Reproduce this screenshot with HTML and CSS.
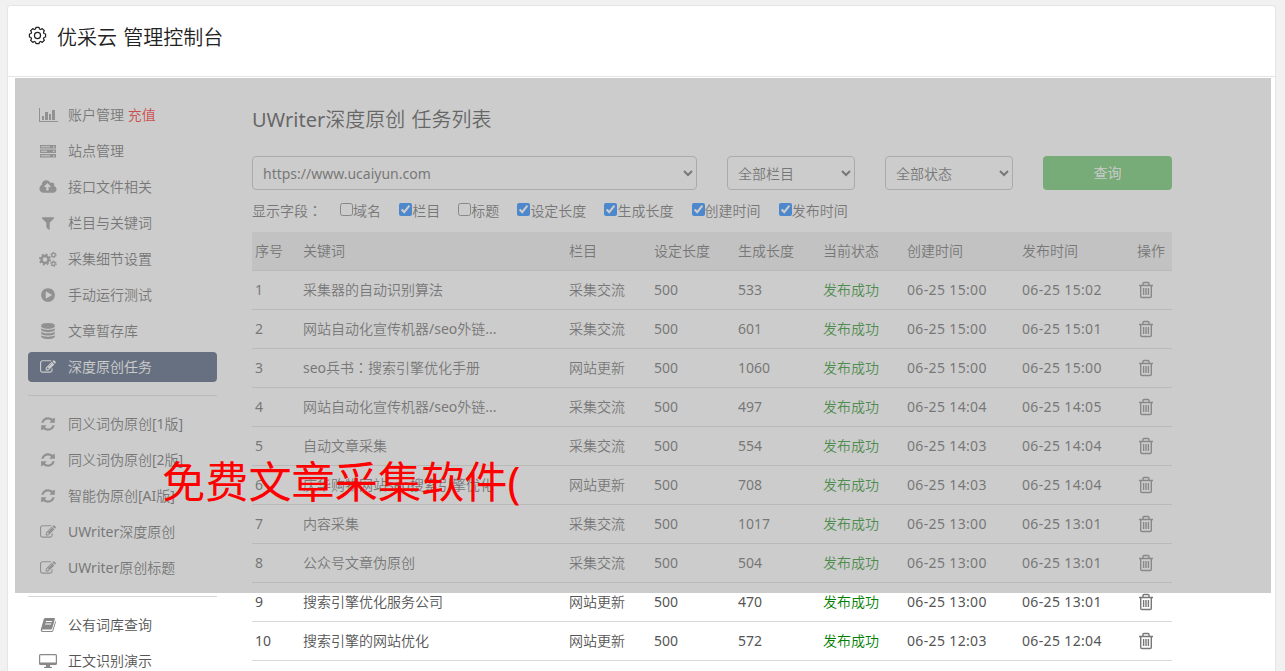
FILE: index.html
```html
<!DOCTYPE html>
<html lang="zh-CN">
<head>
    <meta charset="UTF-8">
    <meta name="viewport" content="width=device-width, initial-scale=1.0">
    <title>优采云 管理控制台</title>
    <link rel="stylesheet" href="styles.css">
</head>
<body>

<!-- 图标 -->
<svg class="sprite">
    <symbol id="i-chart" viewBox="0 0 20 16"><path d="M1 1h1v13h18v1H1zM4 9h2v4H4zM7 5h3v8H7zM11 7h2v6h-2zM14 3h3v10h-3z"/></symbol>
    <symbol id="i-server" viewBox="0 0 20 16"><path fill-rule="evenodd" d="M2 2h16v3.500H2zM3 3.300v1h9v-1zM15 3.200v1.200h1.500V3.200zM2 6.500h16V10H2zM3 7.800v1h6v-1zM15 7.700v1.200h1.500V7.700zM2 11h16v3.500H2zM3 12.300v1h9v-1zM15 12.200v1.200h1.500v-1.200z"/></symbol>
    <symbol id="i-cloud" viewBox="-64 0 1920 1792"><path d="M1216 864q0-14-9-23l-352-352q-9-9-23-9t-23 9l-351 351q-10 12-10 24 0 14 9 23t23 9h224v352q0 13 9.500 22.500t22.500 9.500h192q13 0 22.500-9.500t9.500-22.500v-352h224q13 0 22.500-9.500t9.500-22.500zm640 288q0 159-112.500 271.500t-271.500 112.500h-1088q-185 0-316.500-131.500t-131.500-316.500q0-130 70-240t188-165q-2-30-2-43 0-212 150-362t362-150q156 0 285.500 87t188.500 231q71-62 166-62 106 0 181 75t75 181q0 76-41 138 130 31 213.500 135.500t83.500 238.500z"/></symbol>
    <symbol id="i-filter" viewBox="0 0 1792 1792"><path d="M1595 295q17 41-14 70l-493 493v742q0 42-39 59-13 5-25 5-27 0-45-19l-256-256q-19-19-19-45v-486l-493-493q-31-29-14-70 17-39 59-39h1280q42 0 59 39z"/></symbol>
    <symbol id="i-cogs" viewBox="0 0 20 16">
        <g fill="none" stroke="currentColor">
            <circle cx="7" cy="8.500" r="3.500" stroke-width="2.400"/>
            <circle cx="7" cy="8.500" r="5.200" stroke-width="1.600" stroke-dasharray="2.040 2.040"/>
            <circle cx="15.500" cy="4" r="1.800" stroke-width="1.300"/>
            <circle cx="15.500" cy="4" r="2.800" stroke-width="1" stroke-dasharray="1.400 1.530"/>
            <circle cx="15.500" cy="12.800" r="1.800" stroke-width="1.300"/>
            <circle cx="15.500" cy="12.800" r="2.800" stroke-width="1" stroke-dasharray="1.400 1.530"/>
        </g>
    </symbol>
    <symbol id="i-play" viewBox="0 0 1792 1792"><path d="M896 128q209 0 385.500 103t279.500 279.500 103 385.500-103 385.500-279.500 279.500-385.500 103-385.500-103-279.500-279.500-103-385.500 103-385.500 279.500-279.500 385.500-103zm384 823q32-18 32-55t-32-55l-544-320q-31-19-64-1-32 19-32 56v640q0 37 32 56 16 8 32 8 17 0 32-9z"/></symbol>
    <symbol id="i-db" viewBox="0 0 1792 1792"><path d="M896 768q237 0 443-43t325-127v170q0 69-103 128t-280 93.500-385 34.500-385-34.500-280-93.500-103-128v-170q119 84 325 127t443 43zm0 768q237 0 443-43t325-127v170q0 69-103 128t-280 93.500-385 34.500-385-34.500-280-93.500-103-128v-170q119 84 325 127t443 43zm0-384q237 0 443-43t325-127v170q0 69-103 128t-280 93.500-385 34.500-385-34.500-280-93.500-103-128v-170q119 84 325 127t443 43zm0-1152q208 0 385 34.500t280 93.500 103 128v128q0 69-103 128t-280 93.500-385 34.500-385-34.500-280-93.500-103-128v-128q0-69 103-128t280-93.500 385-34.500z"/></symbol>
    <symbol id="i-edit" viewBox="0 0 1792 1792"><path d="M888 1184l116-116-152-152-116 116v56h96v96h56zm440-720q-16-16-33 1l-350 350q-17 17-1 33t33-1l350-350q17-17 1-33zm80 594v190q0 119-84.500 203.500t-203.500 84.500h-832q-119 0-203.500-84.500t-84.500-203.500v-832q0-119 84.500-203.500t203.500-84.500h832q63 0 117 25 15 7 18 23 3 17-9 29l-49 49q-14 14-32 8-23-6-45-6h-832q-66 0-113 47t-47 113v832q0 66 47 113t113 47h832q66 0 113-47t47-113v-126q0-13 9-22l64-64q15-15 35-7t20 29zm-96-738l288 288-672 672h-288v-288zm444 132l-92 92-288-288 92-92q28-28 68-28t68 28l152 152q28 28 28 68t-28 68z"/></symbol>
    <symbol id="i-refresh" viewBox="0 0 1792 1792"><path d="M1639 1056q0 5-1 7-64 268-268 434.500t-478 166.500q-146 0-282.500-55t-243.500-157l-129 129q-19 19-45 19t-45-19-19-45v-448q0-26 19-45t45-19h448q26 0 45 19t19 45-19 45l-137 137q71 66 161 102t187 36q134 0 250-65t186-179q11-17 53-117 8-23 30-23h192q13 0 22.500 9.500t9.500 22.500zm25-800v448q0 26-19 45t-45 19h-448q-26 0-45-19t-19-45 19-45l138-138q-148-137-349-137-134 0-250 65t-186 179q-11 17-53 117-8 23-30 23h-199q-13 0-22.500-9.500t-9.500-22.500v-7q65-268 270-434.500t480-166.500q146 0 284 55.500t245 156.500l130-129q19-19 45-19t45 19 19 45z"/></symbol>
    <symbol id="i-book" viewBox="0 0 20 16"><path fill-rule="evenodd" d="M7.500 1h8.700q1 0 .7 1l-2.700 9.500q-.3 1-1.300 1H4.800q-1 0-.8.8t1 .7h8.500q.8 0 1-.8L17.300 4q.8.500.5 1.400l-2.500 8.300q-.4 1.300-1.700 1.300H4.700Q2.500 15 2.800 12.500L5.700 2.300Q6.200 1 7.500 1zM8 4l-.3 1h6l.3-1zM7.300 6.500l-.3 1h6l.3-1z"/></symbol>
    <symbol id="i-desktop" viewBox="0 0 20 16"><path fill-rule="evenodd" d="M2.500 1h15Q19 1 19 2.500v8q0 1.500-1.500 1.500H12v1.500l2 .8v.7H6v-.7l2-.8V12H2.500Q1 12 1 10.500v-8Q1 1 2.500 1zM2.200 2.200v7.300h15.600V2.200z"/></symbol>
    <symbol id="i-trash" viewBox="0 0 16 18"><path fill="none" stroke="currentColor" stroke-width="1.400" d="M1 4.500h14M5 4V2.500Q5 1.500 6 1.500h4q1 0 1 1V4M2.700 4.500v10.800q0 1.200 1.200 1.200h8.200q1.200 0 1.200-1.200V4.500M5.600 7v7M8 7v7M10.400 7v7"/></symbol>
    <symbol id="i-gear" viewBox="0 0 20 20"><g fill="none" stroke="currentColor" stroke-width="1.300"><circle cx="10" cy="10" r="3.200"/><path stroke-linejoin="round" d="M8.400 1.500h3.200l.5 1.700 1.300.5 1.600-.9 2.200 2.200-.9 1.600.5 1.300 1.700.5v3.200l-1.700.5-.5 1.300.9 1.600-2.200 2.200-1.600-.9-1.300.5-.5 1.700H8.400l-.5-1.700-1.300-.5-1.600.9L2.800 15l.9-1.600-.5-1.300-1.700-.5V8.400l1.700-.5.500-1.300L2.800 5 5 2.800l1.600.9 1.300-.5z"/></g></symbol>
</svg>

<div class="panel">
    <div class="panel-header">
        <svg class="gear"><use href="#i-gear"/></svg>
        <h1>优采云 管理控制台</h1>
    </div>

    <div class="panel-body">
        <div class="sidebar">
            <a class="nav-item"><svg><use href="#i-chart"/></svg>账户管理 <span class="recharge">充值</span></a>
            <a class="nav-item"><svg><use href="#i-server"/></svg>站点管理</a>
            <a class="nav-item"><svg><use href="#i-cloud"/></svg>接口文件相关</a>
            <a class="nav-item"><svg><use href="#i-filter"/></svg>栏目与关键词</a>
            <a class="nav-item"><svg><use href="#i-cogs"/></svg>采集细节设置</a>
            <a class="nav-item"><svg><use href="#i-play"/></svg>手动运行测试</a>
            <a class="nav-item"><svg><use href="#i-db"/></svg>文章暂存库</a>
            <a class="nav-item active"><svg><use href="#i-edit"/></svg>深度原创任务</a>
            <hr>
            <a class="nav-item"><svg><use href="#i-refresh"/></svg>同义词伪原创[1版]</a>
            <a class="nav-item"><svg><use href="#i-refresh"/></svg>同义词伪原创[2版]</a>
            <a class="nav-item"><svg><use href="#i-refresh"/></svg>智能伪原创[AI版]</a>
            <a class="nav-item"><svg><use href="#i-edit"/></svg>UWriter深度原创</a>
            <a class="nav-item"><svg><use href="#i-edit"/></svg>UWriter原创标题</a>
            <hr>
            <a class="nav-item"><svg><use href="#i-book"/></svg>公有词库查询</a>
            <a class="nav-item"><svg><use href="#i-desktop"/></svg>正文识别演示</a>
        </div>

        <div class="main">
            <h2>UWriter深度原创 任务列表</h2>

            <div class="filters">
                <select><option>https://www.ucaiyun.com</option></select>
                <select><option>全部栏目</option></select>
                <select><option>全部状态</option></select>
                <button class="search-btn">查询</button>
            </div>

            <div class="fields">
                <span>显示字段<span class="colon" lang="zh-TW">：</span></span>
                <label><input type="checkbox">域名</label>
                <label><input type="checkbox" checked>栏目</label>
                <label><input type="checkbox">标题</label>
                <label><input type="checkbox" checked>设定长度</label>
                <label><input type="checkbox" checked>生成长度</label>
                <label><input type="checkbox" checked>创建时间</label>
                <label><input type="checkbox" checked>发布时间</label>
            </div>

            <table>
                <colgroup>
                    <col class="c-num"><col class="c-key"><col class="c-cat"><col class="c-len"><col class="c-cat"><col class="c-len"><col class="c-time"><col class="c-time"><col class="c-op">
                </colgroup>
                <thead>
                    <tr><th>序号</th><th>关键词</th><th>栏目</th><th>设定长度</th><th>生成长度</th><th>当前状态</th><th>创建时间</th><th>发布时间</th><th>操作</th></tr>
                </thead>
                <tbody id="tasks"></tbody>
            </table>
        </div>
    </div>
</div>

<div class="overlay"></div>
<div class="caption">免费文章采集软件(</div>

<script>
    const tasks = [
        ["采集器的自动识别算法", "采集交流", 533, "06-25 15:00", "06-25 15:02"],
        ["网站自动化宣传机器/seo外链...", "采集交流", 601, "06-25 15:00", "06-25 15:01"],
        ["seo兵书<span class='colon' lang='zh-TW'>：</span>搜索引擎优化手册", "网站更新", 1060, "06-25 15:00", "06-25 15:00"],
        ["网站自动化宣传机器/seo外链...", "采集交流", 497, "06-25 14:04", "06-25 14:05"],
        ["自动文章采集", "采集交流", 554, "06-25 14:03", "06-25 14:04"],
        ["庆华购物网站seo搜索引擎优化", "网站更新", 708, "06-25 14:03", "06-25 14:04"],
        ["内容采集", "采集交流", 1017, "06-25 13:00", "06-25 13:01"],
        ["公众号文章伪原创", "采集交流", 504, "06-25 13:00", "06-25 13:01"],
        ["搜索引擎优化服务公司", "网站更新", 470, "06-25 13:00", "06-25 13:01"],
        ["搜索引擎的网站优化", "网站更新", 572, "06-25 12:03", "06-25 12:04"]
    ];

    document.getElementById("tasks").innerHTML = tasks.map((t, i) => `<tr>
        <td>${i + 1}</td><td>${t[0]}</td><td>${t[1]}</td><td>500</td><td>${t[2]}</td>
        <td class="success">发布成功</td><td class="time">${t[3]}</td><td class="time">${t[4]}</td>
        <td><svg class="trash"><use href="#i-trash"/></svg></td></tr>`).join('');
</script>

</body>
</html>
```
FILE: styles.css
```css
* {
    box-sizing: border-box;
}
body {
    margin: 0;
    padding: 5px 9px 0 7px;
    height: 671px;
    overflow: hidden;
    background-color: #f1f1f1;
    font-family: "Noto Sans", "Noto Sans CJK SC DemiLight", "Noto Sans CJK SC", sans-serif;
    font-size: 14px;
    font-weight: 400;
    color: #555;
}
.sprite {
    display: none;
}
svg {
    fill: currentColor;
}
.panel {
    height: 666px;
    overflow: hidden;
    background-color: #fff;
    border: 1px solid #e5e5e5;
    border-bottom: 0;
    border-radius: 4px 4px 0 0;
}
.panel-header {
    display: flex;
    align-items: center;
    height: 71px;
    padding: 0 20px 9px;
    border-bottom: 1px solid #e5e5e5;
    color: #222;
}
.gear {
    width: 19px;
    height: 19px;
    margin-top: -3px;
    margin-right: 10px;
}
h1, h2 {
    margin: 0;
    font-size: 20px;
    font-weight: 400;
    word-spacing: 1px;
}
.panel-body {
    display: flex;
    gap: 35px;
    padding: 23px 20px 0;
}
.sidebar {
    width: 189px;
}
.nav-item {
    display: flex;
    align-items: center;
    height: 30px;
    margin-bottom: 6px;
    padding: 0 0 2px 10px;
    border-radius: 4px;
    white-space: pre;
}
.nav-item svg {
    width: 20px;
    height: 16px;
    margin: 2px 10px 0 0;
    color: #888;
}
.nav-item.active {
    background-color: #334767;
    color: #fff;
}
.nav-item.active svg {
    color: #fff;
}
.recharge {
    color: #f00;
}
.sidebar hr {
    height: 1px;
    margin: 13px 0;
    border: 0;
    background-color: #d8d8d8;
}
.main {
    width: 920px;
}
h2 {
    height: 56px;
    line-height: 39px;
    color: #333;
}
.filters {
    display: grid;
    grid-template-columns: 445px 128px 128px 129px;
    gap: 30px;
    height: 34px;
}
select {
    height: 34px;
    padding: 0 8px 0 6px;
    border: 1px solid #bbb;
    border-radius: 4px;
    background-color: #fff;
    font: inherit;
    color: #555;
}
.search-btn {
    padding-bottom: 3px;
    border: 0;
    border-radius: 4px;
    background-color: #55bd55;
    font: inherit;
    color: #fff;
}
.fields {
    display: flex;
    align-items: center;
    gap: 18.1px;
    height: 42px;
    padding-bottom: 2px;
}
.fields label {
    display: flex;
    align-items: center;
}
.fields input {
    width: 13px;
    height: 13px;
    margin: 0 0 1px;
}
.colon {
    font-family: "Noto Sans CJK TC", sans-serif;
    line-height: 1;
}
table {
    width: 920px;
    table-layout: fixed;
    border-collapse: separate;
    border-spacing: 0;
}
th, td {
    height: 39px;
    padding: 0 3px 2px;
    border-bottom: 1px solid #d9d9d9;
    font-weight: 400;
    text-align: left;
    white-space: nowrap;
}
th {
    background-color: #eaeaea;
}
.c-num { width: 48px; }
.c-key { width: 266px; }
.c-cat { width: 85px; }
.c-len { width: 84px; }
.c-time { width: 115px; }
.c-op { width: 38px; }
.success {
    color: #008000;
}
.time {
    letter-spacing: 0.35px;
}
.trash {
    display: block;
    width: 16px;
    height: 18px;
    margin: 2px 0 0 1px;
    color: #777;
}
.overlay {
    position: absolute;
    left: 15px;
    top: 78px;
    width: 1256px;
    height: 515px;
    background-color: rgba(153, 153, 153, 0.5);
}
.caption {
    position: absolute;
    left: 162px;
    top: 451px;
    font-family: "Noto Sans", "Noto Sans CJK SC", sans-serif;
    font-size: 43.2px;
    font-weight: 400;
    line-height: 62px;
    color: #f00;
    white-space: nowrap;
}
```
